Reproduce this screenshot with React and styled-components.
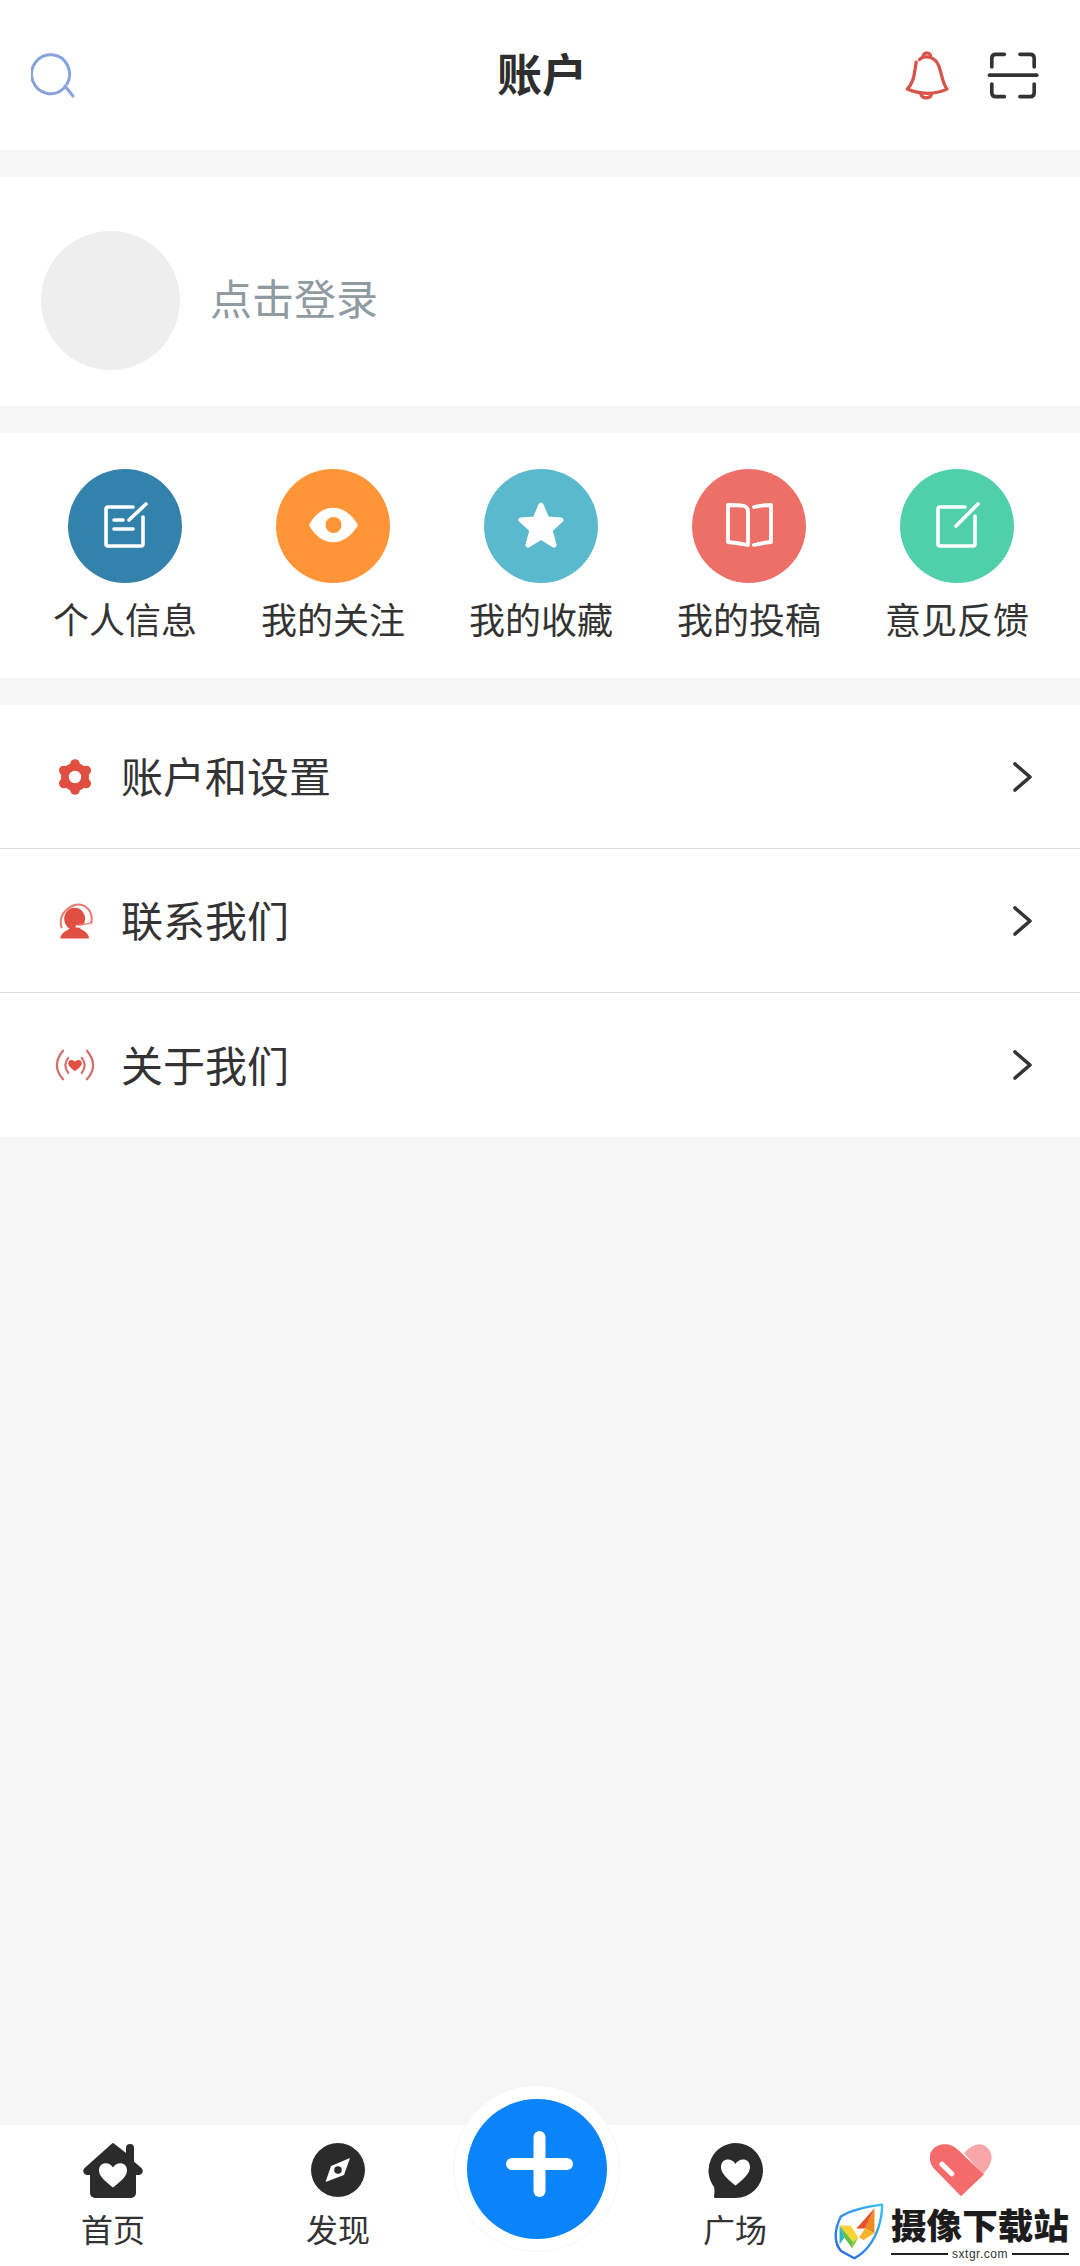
import React from 'react';
import styled, { createGlobalStyle } from 'styled-components';

const GlobalStyle = createGlobalStyle`
  html, body {
    margin: 0;
    padding: 0;
    background: #f6f6f6;
    font-family: "Noto Sans CJK SC", "Noto Sans", sans-serif;
  }
`;

const Heart = ({ cx, cy, w, h, fill }) => {
  const x = cx - w / 2;
  const y = cy - h * 0.5;
  return (
    <path
      fill={fill}
      d={`M${cx} ${y + h * 0.2} C${cx - w * 0.12} ${y - h * 0.04} ${x} ${y - h * 0.04} ${x} ${y + h * 0.32} C${x} ${y + h * 0.58} ${cx - w * 0.2} ${y + h * 0.82} ${cx} ${y + h} C${cx + w * 0.2} ${y + h * 0.82} ${x + w} ${y + h * 0.58} ${x + w} ${y + h * 0.32} C${x + w} ${y - h * 0.04} ${cx + w * 0.12} ${y - h * 0.04} ${cx} ${y + h * 0.2} Z`}
    />
  );
};

const SearchIcon = () => (
  <svg width="44" height="46" viewBox="0 0 44 46" fill="none" stroke="#86a3dc" strokeWidth="3" strokeLinecap="round">
    <path d="M33 36 A19 19.5 0 1 1 36 32" />
    <path d="M34 34 L42 44" />
  </svg>
);

const BellIcon = () => (
  <svg width="44" height="52" viewBox="254 86 134 156" fill="none" stroke="#d8544a" strokeWidth="10" strokeLinecap="round" strokeLinejoin="round">
    <path d="M288 125 C282 160 282 185 261 207 C300 224 345 224 382 207 C360 180 368 125 335 112 C322 106 306 108 298 117" />
    <path d="M309 108 A11 11 0 1 1 332 108" />
    <path d="M302 222 A17 15 0 0 0 335 222" />
  </svg>
);

const ScanIcon = () => (
  <svg width="52" height="49" viewBox="500 90 156 148" fill="none" stroke="#333" strokeWidth="11" strokeLinecap="round">
    <path d="M552 100 H526 Q514 100 514 112 V138" />
    <path d="M599 100 H630 Q642 100 642 112 V138" />
    <path d="M514 190 V216 Q514 228 526 228 H552" />
    <path d="M642 190 V216 Q642 228 630 228 H599" />
    <path d="M507 163 H650" />
  </svg>
);

const NoteGlyph = () => (
  <svg width="114" height="114" viewBox="0 0 114 114" fill="none" stroke="#fff" strokeWidth="3.6" strokeLinecap="round" strokeLinejoin="round">
    <path d="M65 38 H40 Q38 38 38 40 V75 Q38 77 40 77 H73 Q75 77 75 75 V48" />
    <path d="M61 51 L78 35" />
    <path d="M46 51 H55" />
    <path d="M46 60 H65" />
  </svg>
);

const EyeGlyph = ({ color }) => (
  <svg width="114" height="114" viewBox="0 0 114 114">
    <path fill="#fff" d="M33 56 C45 33 69 33 82 56 C69 79 45 79 33 56 Z" />
    <circle cx="57.5" cy="56" r="8" fill={color} />
  </svg>
);

const StarGlyph = () => (
  <svg width="114" height="114" viewBox="0 0 114 114">
    <polygon
      fill="#fff"
      stroke="#fff"
      strokeWidth="5"
      strokeLinejoin="round"
      points="57,36 63,50 77,51 66,61 70,76 57,68 44,76 48,61 37,51 51,50"
    />
  </svg>
);

const BookGlyph = () => (
  <svg width="114" height="114" viewBox="0 0 114 114" fill="none" stroke="#fff" strokeWidth="3.8" strokeLinecap="round" strokeLinejoin="round">
    <path d="M36 36 Q46 36 52 37 Q56 38 56 43 V76 Q46 74 36 73 Z" />
    <path d="M62 38 Q70 36 79 36 V73 Q70 74 62 76" />
  </svg>
);

const EditGlyph = () => (
  <svg width="114" height="114" viewBox="0 0 114 114" fill="none" stroke="#fff" strokeWidth="3.6" strokeLinecap="round" strokeLinejoin="round">
    <path d="M65 38 H40 Q38 38 38 40 V75 Q38 77 40 77 H73 Q75 77 75 75 V47" />
    <path d="M56 57 L78 35" />
  </svg>
);

const GearIcon = () => (
  <svg width="36" height="36" viewBox="0 0 36 36">
    <g fill="#e04f42">
      <circle cx="18" cy="18" r="14" />
      <circle cx="18" cy="5" r="4.8" />
      <circle cx="18" cy="31" r="4.8" />
      <circle cx="6.8" cy="11.5" r="4.8" />
      <circle cx="29.2" cy="11.5" r="4.8" />
      <circle cx="6.8" cy="24.5" r="4.8" />
      <circle cx="29.2" cy="24.5" r="4.8" />
    </g>
    <circle cx="18" cy="18" r="6.2" fill="#fff" />
  </svg>
);

const HeadsetIcon = () => (
  <svg width="36" height="38" viewBox="172 545 110 115">
    <path d="M186 622 C172 575 222 546 250 554 C276 564 282 590 276 612" fill="none" stroke="#e8776c" strokeWidth="6" strokeLinecap="round" />
    <ellipse cx="226" cy="596" rx="32" ry="34" fill="#e04f42" />
    <path fill="#e04f42" d="M182 656 C184 636 204 632 214 624 H240 C250 632 268 636 270 656 Z" />
    <path d="M274 612 Q268 622 232 619" fill="none" stroke="#fff" strokeWidth="7" strokeLinecap="round" />
    <path d="M276 606 Q270 614 240 612" fill="none" stroke="#e8776c" strokeWidth="4" strokeLinecap="round" />
  </svg>
);

const BroadcastIcon = () => (
  <svg width="42" height="34" viewBox="162 982 130 104" fill="none">
    <g stroke="#d2726c" strokeWidth="7" strokeLinecap="round">
      <path d="M206 1012 Q188 1035 206 1058" />
      <path d="M248 1012 Q266 1035 248 1058" />
      <path d="M190 990 Q152 1035 190 1078" />
      <path d="M264 990 Q302 1035 264 1078" />
    </g>
    <Heart cx={227} cy={1035} w={42} h={36} fill="#e04f42" />
  </svg>
);

const Chevron = () => (
  <svg width="22" height="32" viewBox="0 0 22 32" fill="none" stroke="#333" strokeWidth="3.6" strokeLinecap="round" strokeLinejoin="round">
    <path d="M3 3 L18 16 L3 29" />
  </svg>
);

const HomeIcon = () => (
  <svg width="62" height="58" viewBox="0 0 62 58">
    <path
      fill="#2b2b2b"
      stroke="#2b2b2b"
      strokeWidth="2"
      strokeLinejoin="round"
      d="M31 3 L45 14 V7 A3 3 0 0 1 51 7 V21 L59 28 A3 3 0 0 1 57 33 H53 V52 A4 4 0 0 1 49 56 H13 A4 4 0 0 1 9 52 V33 H5 A3 3 0 0 1 3 28 Z"
    />
    <Heart cx={31} cy={34} w={28} h={25} fill="#fff" />
  </svg>
);

const CompassIcon = () => (
  <svg width="54" height="54" viewBox="0 0 54 54">
    <circle cx="27" cy="27" r="27" fill="#2b2b2b" />
    <polygon fill="#fff" points="39,15 33,32 14.5,39 20,23" />
    <circle cx="27" cy="27" r="3.8" fill="#2b2b2b" />
  </svg>
);

const BubbleIcon = () => (
  <svg width="55" height="55" viewBox="0 0 55 55">
    <path fill="#2b2b2b" d="M27.5 0 A27.5 27.5 0 1 1 27.5 55 H7 Q6 55 6 53 Q7 48 6 44 A27.5 27.5 0 0 1 27.5 0 Z" />
    <Heart cx={27.5} cy={29} w={29} h={27} fill="#fff" />
  </svg>
);

const MineIcon = () => (
  <svg width="62" height="53" viewBox="333 45 180 155">
    <path fill="#f9a6a9" d="M432 72 C456 42 486 40 498 54 C518 72 516 96 500 118 L487 134 Z" />
    <path fill="#f56b6b" d="M423 198 L343 116 C322 88 332 60 355 50 C382 40 402 50 414 62 L490 134 Z" />
    <path d="M367 104 L396 132" stroke="#fff" strokeWidth="15" strokeLinecap="round" />
  </svg>
);

const PlusGlyph = () => (
  <svg width="140" height="140" viewBox="0 0 140 140" stroke="#fff" strokeWidth="12" strokeLinecap="round">
    <path d="M45 65 H100" />
    <path d="M72.5 38 V92" />
  </svg>
);

const ShieldLogo = () => (
  <svg width="50" height="57" viewBox="42 222 148 170">
    <defs>
      <linearGradient id="shieldEdge" x1="1" y1="0" x2="0" y2="1">
        <stop offset="0" stopColor="#35c0f0" />
        <stop offset="1" stopColor="#2a62e0" />
      </linearGradient>
    </defs>
    <path
      fill="#fff"
      stroke="url(#shieldEdge)"
      strokeWidth="7"
      strokeLinejoin="round"
      d="M185 227 C130 234 90 245 62 262 C40 305 42 345 64 366 L102 387 C130 372 160 340 175 292 C182 268 185 248 185 227 Z"
    />
    <polygon fill="#f08a1e" points="162,238 162,312 134,298" />
    <polygon fill="#e8512c" points="162,238 134,298 108,298" />
    <polygon fill="#f4b52a" points="162,312 134,298 116,325 130,332" />
    <polygon fill="#f7d437" points="58,288 92,290 114,325 98,338" />
    <polygon fill="#63c341" points="58,288 98,338 96,358 72,325" />
    <polygon fill="#2bb3c8" points="58,288 72,325 58,346" />
    <polygon fill="#8acb3c" points="114,325 98,338 96,358" />
  </svg>
);

const shortcuts = [
  { label: '个人信息', color: '#3382ab', Glyph: NoteGlyph },
  { label: '我的关注', color: '#ff9536', Glyph: EyeGlyph },
  { label: '我的收藏', color: '#5bb9cd', Glyph: StarGlyph },
  { label: '我的投稿', color: '#ec6f68', Glyph: BookGlyph },
  { label: '意见反馈', color: '#50d0aa', Glyph: EditGlyph },
];

const menuItems = [
  { label: '账户和设置', Icon: GearIcon },
  { label: '联系我们', Icon: HeadsetIcon },
  { label: '关于我们', Icon: BroadcastIcon },
];

const App = () => (
  <Page>
    <GlobalStyle />
    <Header>
      <SearchIcon />
      <Title>账户</Title>
      <HeaderActions>
        <BellIcon />
        <ScanIcon />
      </HeaderActions>
    </Header>

    <Profile>
      <Avatar />
      <LoginText>点击登录</LoginText>
    </Profile>

    <Shortcuts>
      {shortcuts.map(({ label, color, Glyph }) => (
        <Shortcut key={label}>
          <Badge $color={color}>
            <Glyph color={color} />
          </Badge>
          <ShortcutLabel>{label}</ShortcutLabel>
        </Shortcut>
      ))}
    </Shortcuts>

    <Menu>
      {menuItems.map(({ label, Icon }) => (
        <MenuRow key={label}>
          <MenuIcon>
            <Icon />
          </MenuIcon>
          <MenuLabel>{label}</MenuLabel>
          <ChevronSlot>
            <Chevron />
          </ChevronSlot>
        </MenuRow>
      ))}
    </Menu>

    <Spacer />

    <TabBar>
      <Tab>
        <TabIcon><HomeIcon /></TabIcon>
        <TabLabel>首页</TabLabel>
      </Tab>
      <Tab>
        <TabIcon><CompassIcon /></TabIcon>
        <TabLabel>发现</TabLabel>
      </Tab>
      <Tab />
      <Tab>
        <TabIcon><BubbleIcon /></TabIcon>
        <TabLabel>广场</TabLabel>
      </Tab>
      <Tab>
        <TabIcon><MineIcon /></TabIcon>
      </Tab>

      <PlusRing>
        <PlusButton>
          <PlusGlyph />
        </PlusButton>
      </PlusRing>

      <Watermark>
        <ShieldLogo />
        <WatermarkText>
          <WatermarkName>摄像下载站</WatermarkName>
          <WatermarkUrl>sxtgr.com</WatermarkUrl>
        </WatermarkText>
      </Watermark>
    </TabBar>
  </Page>
);

// Styled Components

const Page = styled.div`
  width: 1080px;
  height: 2266px;
  display: flex;
  flex-direction: column;
  background: #f6f6f6;
  overflow: hidden;
`;

const Header = styled.header`
  height: 150px;
  box-sizing: border-box;
  padding: 0 41px 0 31px;
  display: grid;
  grid-template-columns: 466px 88px 1fr;
  align-items: center;
  background: #fff;
`;

const Title = styled.h1`
  margin: 0 0 4px;
  font-size: 45px;
  line-height: 50px;
  font-weight: 700;
  color: #2e2e2e;
  white-space: nowrap;
`;

const HeaderActions = styled.div`
  display: flex;
  justify-content: flex-end;
  align-items: center;
  gap: 38px;
`;

const Profile = styled.section`
  height: 229px;
  box-sizing: border-box;
  margin-top: 27px;
  padding: 18px 0 0 41px;
  display: flex;
  align-items: center;
  gap: 30px;
  background: #fff;
`;

const Avatar = styled.div`
  width: 139px;
  height: 139px;
  border-radius: 50%;
  background: #eeeeee;
`;

const LoginText = styled.div`
  margin-bottom: 8px;
  font-size: 42px;
  color: #8f9ba1;
`;

const Shortcuts = styled.section`
  height: 245px;
  box-sizing: border-box;
  margin-top: 27px;
  padding: 36px 0 0 21px;
  display: grid;
  grid-template-columns: repeat(5, 208px);
  align-content: start;
  background: #fff;
`;

const Shortcut = styled.div`
  display: flex;
  flex-direction: column;
  align-items: center;
  gap: 15px;
`;

const Badge = styled.div`
  width: 114px;
  height: 114px;
  border-radius: 50%;
  background: ${({ $color }) => $color};
`;

const ShortcutLabel = styled.div`
  font-size: 36px;
  line-height: 40px;
  color: #333;
  white-space: nowrap;
`;

const Menu = styled.section`
  margin-top: 27px;
  background: #fff;
`;

const MenuRow = styled.div`
  height: 144px;
  box-sizing: border-box;
  padding: 0 46px 0 54px;
  display: flex;
  align-items: center;
  border-bottom: 1px solid #dcdcdc;

  &:last-child {
    border-bottom: none;
  }
`;

const MenuIcon = styled.div`
  width: 42px;
  display: flex;
  justify-content: center;
`;

const MenuLabel = styled.div`
  margin: 0 0 4px 25px;
  font-size: 42px;
  color: #333;
`;

const ChevronSlot = styled.div`
  margin-left: auto;
  display: flex;
`;

const Spacer = styled.div`
  flex: 1;
`;

const TabBar = styled.nav`
  position: relative;
  height: 141px;
  box-sizing: border-box;
  padding-top: 17px;
  display: grid;
  grid-template-columns: 226px 224px 175px 220px 232px;
  background: #fff;
`;

const Tab = styled.div`
  display: flex;
  flex-direction: column;
  align-items: center;
`;

const TabIcon = styled.div`
  height: 56px;
  display: flex;
  align-items: center;
  justify-content: center;
`;

const TabLabel = styled.div`
  margin-top: 12px;
  font-size: 32px;
  line-height: 36px;
  color: #333;
`;

const PlusRing = styled.div`
  position: absolute;
  left: 453px;
  top: -40px;
  width: 167px;
  height: 167px;
  box-sizing: border-box;
  border: 1px solid #f6f6f6;
  border-radius: 50%;
  display: flex;
  align-items: center;
  justify-content: center;
  background: #fff;
`;

const PlusButton = styled.div`
  width: 140px;
  height: 140px;
  border-radius: 50%;
  background: #0a84f8;
`;

const Watermark = styled.div`
  position: absolute;
  left: 834px;
  top: 78px;
  display: flex;
  gap: 7px;
`;

const WatermarkText = styled.div`
  width: 178px;
  display: flex;
  flex-direction: column;
`;

const WatermarkName = styled.div`
  font-size: 35.6px;
  line-height: 42px;
  font-weight: 900;
  color: #1c1c1c;
  white-space: nowrap;
`;

const WatermarkUrl = styled.div`
  margin-top: 2px;
  display: flex;
  align-items: center;
  gap: 4px;
  font-size: 12px;
  line-height: 14px;
  letter-spacing: 0.5px;
  font-family: "Liberation Sans", sans-serif;
  color: #333;

  &::before,
  &::after {
    content: "";
    flex: 1;
    height: 1.5px;
    background: #222;
  }
`;

export default App;
